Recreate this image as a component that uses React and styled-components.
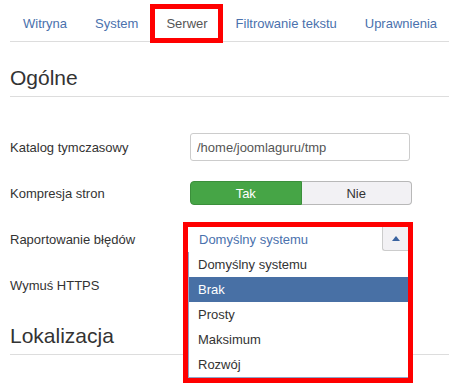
import React from "react";
import styled, { createGlobalStyle, css } from "styled-components";

// Joomla global configuration, "Serwer" tab with error reporting dropdown open

const GlobalStyle = createGlobalStyle`
    body {
        margin: 0;
        background: #fff;
        font-family: "Liberation Sans", Arial, sans-serif;
        font-size: 13px;
        color: #333;
    }
`;

const Page = styled.div`
    min-height: 384px;
    padding-left: 10px;
`;

const Tabs = styled.ul`
    display: flex;
    margin: 0;
    padding: 0;
    list-style: none;
    border-bottom: 1px solid #ddd;
`;

const Tab = styled.li`
    position: relative;
    flex-shrink: 0;
    padding: 15px 14px 9px;
    line-height: 17px;
    white-space: nowrap;
    color: ${(p) => (p.$active ? "#555" : "#4a71ad")};
    &:first-child {
        padding-left: 13px;
    }
    ${(p) =>
        p.$marked &&
        css`
            &::after {
                content: "";
                position: absolute;
                top: 4px;
                left: -2px;
                right: -1px;
                bottom: -2px;
                border: 5px solid #f00;
            }
        `}
`;

const SectionTitle = styled.h2`
    margin: ${(p) => p.$top}px 0 0;
    padding-bottom: 6px;
    font-size: 21px;
    font-weight: normal;
    line-height: 25px;
    color: #333;
    border-bottom: 1px solid #ddd;
`;

const Form = styled.div`
    display: flex;
    flex-direction: column;
    gap: 18px;
    margin-top: 36px;
`;

const Row = styled.div`
    display: grid;
    grid-template-columns: 180px auto;
    align-items: center;
    height: 28px;
`;

const Label = styled.label`
    color: #333;
`;

const TextInput = styled.input`
    box-sizing: border-box;
    width: 220px;
    height: 28px;
    padding: 0 6px;
    border: 1px solid #ccc;
    border-radius: 3px;
    font: inherit;
    color: #555;
    outline: none;
`;

const Toggle = styled.div`
    display: flex;
    width: 222px;
    height: 24px;
`;

const ToggleButton = styled.button`
    flex: 1;
    padding: 0;
    font: inherit;
    border: 1px solid;
    ${(p) =>
        p.$on
            ? css`
                  background: #46a546;
                  border-color: #3b8f3b;
                  color: #fff;
                  border-radius: 4px 0 0 4px;
              `
            : css`
                  background: #f2f1f4;
                  border-color: #b8b8b8;
                  border-left: none;
                  color: #333;
                  border-radius: 0 4px 4px 0;
              `}
`;

const SelectCell = styled.div`
    position: relative;
    width: 220px;
    height: 28px;
`;

const Chosen = styled.div`
    position: absolute;
    top: -3px;
    left: -7px;
    z-index: 2;
    box-sizing: border-box;
    width: 230px;
    border: 5px solid #f00;
    background: #fff;
`;

const Field = styled.div`
    display: flex;
    justify-content: space-between;
    align-items: flex-start;
    height: 25px;
    padding-left: 11px;
    color: #4a71ad;
    line-height: 25px;
`;

const ArrowButton = styled.span`
    display: flex;
    align-items: center;
    justify-content: center;
    box-sizing: border-box;
    width: 26px;
    height: 24px;
    background: #f2f1f4;
    border-left: 1px solid #ccc;
    border-bottom: 1px solid #ccc;
    border-bottom-left-radius: 3px;
`;

const List = styled.ul`
    margin: 0;
    padding: 0;
    list-style: none;
    border-left: 1px solid #8ea6c9;
    border-bottom: 1px solid #8ea6c9;
`;

const Option = styled.li`
    height: 25px;
    padding-left: 9px;
    line-height: 25px;
    color: ${(p) => (p.$highlighted ? "#fff" : "#333")};
    background: ${(p) => (p.$highlighted ? "#4870a5" : "transparent")};
`;

const tabs = ["Witryna", "System", "Serwer", "Filtrowanie tekstu", "Uprawnienia"];
const levels = ["Domyślny systemu", "Brak", "Prosty", "Maksimum", "Rozwój"];

const App = () => {
    return (
        <Page>
            <GlobalStyle />
            <Tabs>
                {tabs.map((t) => (
                    <Tab key={t} $active={t === "Serwer"} $marked={t === "Serwer"}>
                        {t}
                    </Tab>
                ))}
            </Tabs>
            <SectionTitle $top={23}>Ogólne</SectionTitle>
            <Form>
                <Row>
                    <Label>Katalog tymczasowy</Label>
                    <TextInput defaultValue="/home/joomlaguru/tmp" />
                </Row>
                <Row>
                    <Label>Kompresja stron</Label>
                    <Toggle>
                        <ToggleButton $on>Tak</ToggleButton>
                        <ToggleButton>Nie</ToggleButton>
                    </Toggle>
                </Row>
                <Row>
                    <Label>Raportowanie błędów</Label>
                    <SelectCell>
                        <Chosen>
                            <Field>
                                Domyślny systemu
                                <ArrowButton>
                                    <svg width="8" height="5" viewBox="0 0 8 5">
                                        <path d="M0 5 L4 0 L8 5 Z" fill="#3a63a0" />
                                    </svg>
                                </ArrowButton>
                            </Field>
                            <List>
                                {levels.map((l) => (
                                    <Option key={l} $highlighted={l === "Brak"}>
                                        {l}
                                    </Option>
                                ))}
                            </List>
                        </Chosen>
                    </SelectCell>
                </Row>
                <Row>
                    <Label>Wymuś HTTPS</Label>
                </Row>
            </Form>
            <SectionTitle $top={24}>Lokalizacja</SectionTitle>
        </Page>
    );
};

export default App;
